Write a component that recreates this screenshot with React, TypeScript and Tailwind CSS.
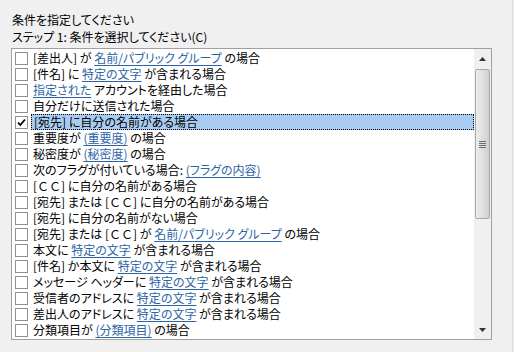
import React from 'react';

type Part = string | { link: string } | { wide: string };

const CC = { wide: 'ＣＣ' };

const rows: Part[][] = [
  ['[差出人] が ', { link: '名前/パブリック グループ' }, ' の場合'],
  ['[件名] に ', { link: '特定の文字' }, ' が含まれる場合'],
  [{ link: '指定された' }, ' アカウントを経由した場合'],
  ['自分だけに送信された場合'],
  ['[宛先] に自分の名前がある場合'],
  ['重要度が ', { link: '(重要度)' }, ' の場合'],
  ['秘密度が ', { link: '(秘密度)' }, ' の場合'],
  ['次のフラグが付いている場合: ', { link: '(フラグの内容)' }],
  ['[', CC, '] に自分の名前がある場合'],
  ['[宛先] または [', CC, '] に自分の名前がある場合'],
  ['[宛先] に自分の名前がない場合'],
  ['[宛先] または [', CC, '] が ', { link: '名前/パブリック グループ' }, ' の場合'],
  ['本文に ', { link: '特定の文字' }, ' が含まれる場合'],
  ['[件名] か本文に ', { link: '特定の文字' }, ' が含まれる場合'],
  ['メッセージ ヘッダーに ', { link: '特定の文字' }, ' が含まれる場合'],
  ['受信者のアドレスに ', { link: '特定の文字' }, ' が含まれる場合'],
  ['差出人のアドレスに ', { link: '特定の文字' }, ' が含まれる場合'],
  ['分類項目が ', { link: '(分類項目)' }, ' の場合'],
];

function CheckBox({ checked }: { checked?: boolean }) {
  return (
    <div className="w-[13px] h-[13px] shrink-0 border border-[#8e8f8f] bg-white flex items-center justify-center">
      {checked && (
        <svg width="9" height="9" viewBox="0 0 9 9">
          <path d="M1 4.5 L3.3 7 L8 1.5" fill="none" stroke="#000" strokeWidth="1.8" />
        </svg>
      )}
    </div>
  );
}

function Row({ parts, selected }: { parts: Part[]; selected?: boolean }) {
  return (
    <div className="h-[16px] flex items-center pl-[3px]">
      <CheckBox checked={selected} />
      <div
        className={
          'ml-[3px] h-[16px] flex-1 flex items-center px-[2px] whitespace-pre ' +
          (selected ? 'bg-[#a9cdf2] border border-dotted border-black' : '')
        }
      >
        {parts.map((p, i) => {
          if (typeof p === 'string') return <span key={i}>{p}</span>;
          if ('wide' in p)
            return (
              <span key={i} className="[font-feature-settings:normal]">
                {p.wide}
              </span>
            );
          return (
            <span key={i} className="text-[#2c65a6] underline underline-offset-2 decoration-[#2c65a6]">
              {p.link}
            </span>
          );
        })}
      </div>
    </div>
  );
}

function ScrollBar() {
  return (
    <div className="w-[17px] shrink-0 bg-[#f0f0f0] flex flex-col items-center">
      <div className="h-[20px] w-full flex items-center justify-center">
        <svg width="7" height="4" viewBox="0 0 7 4">
          <path d="M0 4 L3.5 0 L7 4 Z" fill="#333" />
        </svg>
      </div>
      <div className="h-[150px] w-[15px] rounded-[2px] border border-[#a9a9a9] bg-gradient-to-r from-[#ececec] via-[#e0e0e0] to-[#cfcfcf] flex items-center justify-center">
        <div className="flex flex-col gap-[1px]">
          <div className="w-[7px] h-px bg-[#6e6e6e]" />
          <div className="w-[7px] h-px bg-[#6e6e6e]" />
          <div className="w-[7px] h-px bg-[#6e6e6e]" />
          <div className="w-[7px] h-px bg-[#6e6e6e]" />
        </div>
      </div>
      <div className="flex-1" />
      <div className="h-[18px] w-full flex items-center justify-center">
        <svg width="7" height="4" viewBox="0 0 7 4">
          <path d="M0 0 L7 0 L3.5 4 Z" fill="#333" />
        </svg>
      </div>
    </div>
  );
}

export default function App() {
  return (
    <div
      className="w-[514px] h-[352px] bg-[#f0f0f0] overflow-hidden text-[12px] text-black [font-feature-settings:'palt']"
      style={{ fontFamily: '"Noto Sans CJK JP", "Noto Sans", sans-serif' }}
    >
      <div className="w-[513px] h-full border-r border-[#dcdcdc] pl-[11px] pt-[11px]">
        <div className="h-[17px] leading-[17px] pl-[1px]">条件を指定してください</div>
        <div className="h-[17px] leading-[17px] pl-[1px]">ステップ 1: 条件を選択してください(C)</div>
        <div className="mt-[3px] w-[481px] h-[292px] border border-[#a0a0a0] bg-white flex overflow-hidden">
          <div className="flex-1 pt-[1px] overflow-hidden leading-[16px]">
            {rows.map((r, i) => (
              <Row key={i} parts={r} selected={i === 4} />
            ))}
          </div>
          <ScrollBar />
        </div>
      </div>
    </div>
  );
}
